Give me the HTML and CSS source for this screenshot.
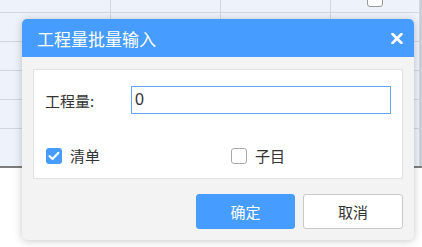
FILE: index.html
```html
<!DOCTYPE html>
<html lang="zh-CN">

<head>
    <meta charset="UTF-8">
    <meta name="viewport" content="width=device-width, initial-scale=1.0">
    <title>工程量批量输入</title>
    <link rel="stylesheet" href="styles.css">
</head>

<body>
    <table class="sheet">
        <colgroup>
            <col class="c-wide"><col class="c-wide"><col class="c-wide"><col class="c-last"><col class="c-edge">
        </colgroup>
        <tr class="row-first">
            <td></td><td></td><td></td><td><span class="mini-check"></span></td><td class="edge"></td>
        </tr>
        <tr><td></td><td></td><td></td><td></td><td class="edge"></td></tr>
        <tr><td></td><td></td><td></td><td></td><td class="edge"></td></tr>
        <tr><td></td><td></td><td></td><td></td><td class="edge"></td></tr>
        <tr><td></td><td></td><td></td><td></td><td class="edge"></td></tr>
        <tr class="row-last"><td></td><td></td><td></td><td></td><td class="edge"></td></tr>
    </table>

    <div class="dialog">
        <div class="dialog-header">
            <span class="dialog-title">工程量批量输入</span>
            <svg class="close" width="12" height="11" viewBox="0 0 12 11">
                <path d="M1.5 1 L10.5 10 M10.5 1 L1.5 10" stroke="#fff" stroke-width="2.6" stroke-linecap="round" />
            </svg>
        </div>
        <div class="dialog-body">
            <div class="panel">
                <div class="field">
                    <label for="qty">工程量:</label>
                    <input type="text" id="qty" value="0">
                </div>
                <div class="options">
                    <div class="option first">
                        <span class="box checked">
                            <svg width="16" height="16" viewBox="0 0 16 16">
                                <path d="M3.6 8.2 L6.6 11 L12.4 4.8" fill="none" stroke="#fff" stroke-width="2.2" stroke-linecap="round" stroke-linejoin="round" />
                            </svg>
                        </span>
                        <span>清单</span>
                    </div>
                    <div class="option">
                        <span class="box"></span>
                        <span>子目</span>
                    </div>
                </div>
            </div>
            <div class="actions">
                <button class="btn primary">确定</button>
                <button class="btn">取消</button>
            </div>
        </div>
    </div>
</body>

</html>
```

FILE: styles.css
```css
body {
    margin: 0;
    width: 422px;
    height: 247px;
    overflow: hidden;
    background-color: #fff;
    font-family: "Noto Sans CJK SC", "Liberation Sans", sans-serif;
    color: #333;
    position: relative;
}

.sheet {
    border-collapse: collapse;
    table-layout: fixed;
    width: 422px;
    margin-top: -16px;
    background-color: #edf2fb;
}

.c-wide {
    width: 110px;
}

.c-last {
    width: 89px;
}

.c-edge {
    width: 3px;
}

.sheet td {
    height: 28px;
    padding: 0;
    border-right: 1px solid #d3d6dc;
    border-bottom: 1px solid #d3d6dc;
}

.sheet td.edge {
    background-color: #c9cdd4;
    border-right: none;
}

.row-last td {
    height: 37px;
    border-bottom: 2px solid #7d7d7d;
}

.mini-check {
    display: block;
    width: 14px;
    height: 14px;
    margin: 2px 0 0 36px;
    background: #fff;
    border: 1px solid #999;
    border-radius: 3px;
}

.dialog {
    position: absolute;
    left: 22px;
    top: 19px;
    width: 392px;
    height: 221px;
    border-radius: 5px;
    overflow: hidden;
    background-color: #f3f3f3;
    box-shadow: 0 1px 8px rgba(0, 0, 0, 0.22);
}

.dialog-header {
    height: 38px;
    background-color: #479cff;
    display: flex;
    align-items: center;
    justify-content: space-between;
    padding: 0 11px 0 15px;
}

.dialog-title {
    color: #fff;
    font-size: 17px;
}

.close {
    margin-top: 1px;
}

.dialog-body {
    padding: 12px 11px 11px 11px;
}

.panel {
    height: 108px;
    background-color: #fff;
    border: 1px solid #e2e2e2;
    padding: 0 11px;
}

.field {
    display: flex;
    align-items: center;
    margin-top: 16px;
}

.field label {
    width: 86px;
    font-size: 15px;
}

.field input {
    width: 255px;
    height: 26px;
    padding: 0 0 0 3px;
    border: 1px solid #62a4f5;
    font-family: "Liberation Sans", sans-serif;
    font-size: 16px;
    color: #333;
    outline: none;
    box-sizing: content-box;
}

.options {
    display: flex;
    margin-top: 31px;
}

.option {
    display: flex;
    align-items: center;
    gap: 8px;
    font-size: 15px;
}

.option.first {
    width: 185px;
    padding-left: 1px;
}

.box {
    width: 14px;
    height: 14px;
    border: 1px solid #a9a9a9;
    border-radius: 3px;
    background: #fff;
}

.box.checked {
    width: 16px;
    height: 16px;
    border: none;
    background-color: #479cff;
}

.box svg {
    display: block;
}

.actions {
    display: flex;
    justify-content: flex-end;
    gap: 8px;
    margin-top: 15px;
}

.btn {
    width: 100px;
    height: 35px;
    border: 1px solid #c8c8c8;
    border-radius: 3px;
    background-color: #fff;
    color: #333;
    font-family: "Noto Sans CJK SC", sans-serif;
    font-size: 15px;
    cursor: pointer;
}

.btn.primary {
    width: 99px;
    background-color: #479cff;
    border-color: #479cff;
    color: #fff;
}
```
